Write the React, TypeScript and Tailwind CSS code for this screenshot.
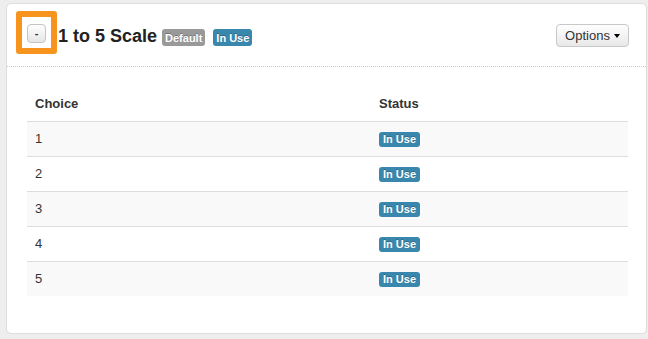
import React from "react";

const rows = ["1", "2", "3", "4", "5"];

const Badge = ({ label, tone, big }: { label: string; tone: "gray" | "blue"; big?: boolean }) => (
  <span
    className={
      "inline-flex items-center justify-center rounded-[3px] font-bold text-white [text-shadow:0_-1px_0_rgba(0,0,0,0.25)] " +
      (tone === "gray" ? "bg-[#999999] " : "bg-[#3a87ad] ") +
      (big ? "h-[17px] px-[3px] text-[11px]" : "h-[15px] px-[4px] text-[11px]")
    }
  >
    {label}
  </span>
);

const App = () => {
  return (
    <div
      className="w-[648px] h-[339px] bg-[#eeeeee] pt-[3px] pl-[6px] text-[#333333]"
      style={{ fontFamily: '"Liberation Sans", Arial, sans-serif' }}
    >
      <div className="w-[641px] h-[331px] bg-white border border-[#dddddd] rounded-[5px] overflow-hidden">
        <div className="h-[63px] border-b border-dotted border-[#cccccc] flex items-start pl-[9px] pr-[17px]">
          <div className="mt-[7px] w-[41px] h-[43px] border-[6px] border-[#f7941d] rounded-[3px] bg-white flex items-center justify-center">
            <button className="w-[19px] h-[19px] mt-[1px] rounded-[4px] border border-[#c4c4c4] bg-gradient-to-b from-white to-[#e6e6e6] text-[11px] font-bold leading-none flex items-center justify-center text-[#333]">
              -
            </button>
          </div>
          <h3 className="ml-[1px] mt-[21px] text-[18px] leading-[22px] font-bold text-[#222] flex items-center">
            1 to 5 Scale
            <span className="ml-[5px] mt-[3px] flex gap-[7px]">
              <Badge label="Default" tone="gray" big />
              <span className="px-[1px] flex">
                <Badge label="In Use" tone="blue" big />
              </span>
            </span>
          </h3>
          <button className="ml-auto mt-[20px] h-[23px] w-[73px] rounded-[4px] border border-[#c8c8c8] bg-gradient-to-b from-white to-[#e8e8e8] text-[13px] text-[#333] flex items-center justify-center gap-[4px]">
            Options
            <span className="w-0 h-0 border-l-[3.5px] border-r-[3.5px] border-t-[4px] border-l-transparent border-r-transparent border-t-[#000]" />
          </button>
        </div>

        <div className="px-[20px] pt-[19px]">
          <table className="w-[601px] border-collapse text-[13px]">
            <thead>
              <tr>
                <th className="w-[344px] text-left font-bold px-[8px] h-[35px] align-middle">Choice</th>
                <th className="text-left font-bold px-[8px] h-[35px] align-middle">Status</th>
              </tr>
            </thead>
            <tbody>
              {rows.map((r, i) => (
                <tr key={r} className={i % 2 === 0 ? "bg-[#f9f9f9]" : ""}>
                  <td className="border-t border-[#dddddd] px-[8px] h-[35px] align-middle">{r}</td>
                  <td className="border-t border-[#dddddd] px-[8px] h-[35px] align-middle">
                    <Badge label="In Use" tone="blue" />
                  </td>
                </tr>
              ))}
            </tbody>
          </table>
        </div>
      </div>
    </div>
  );
};

export default App;
